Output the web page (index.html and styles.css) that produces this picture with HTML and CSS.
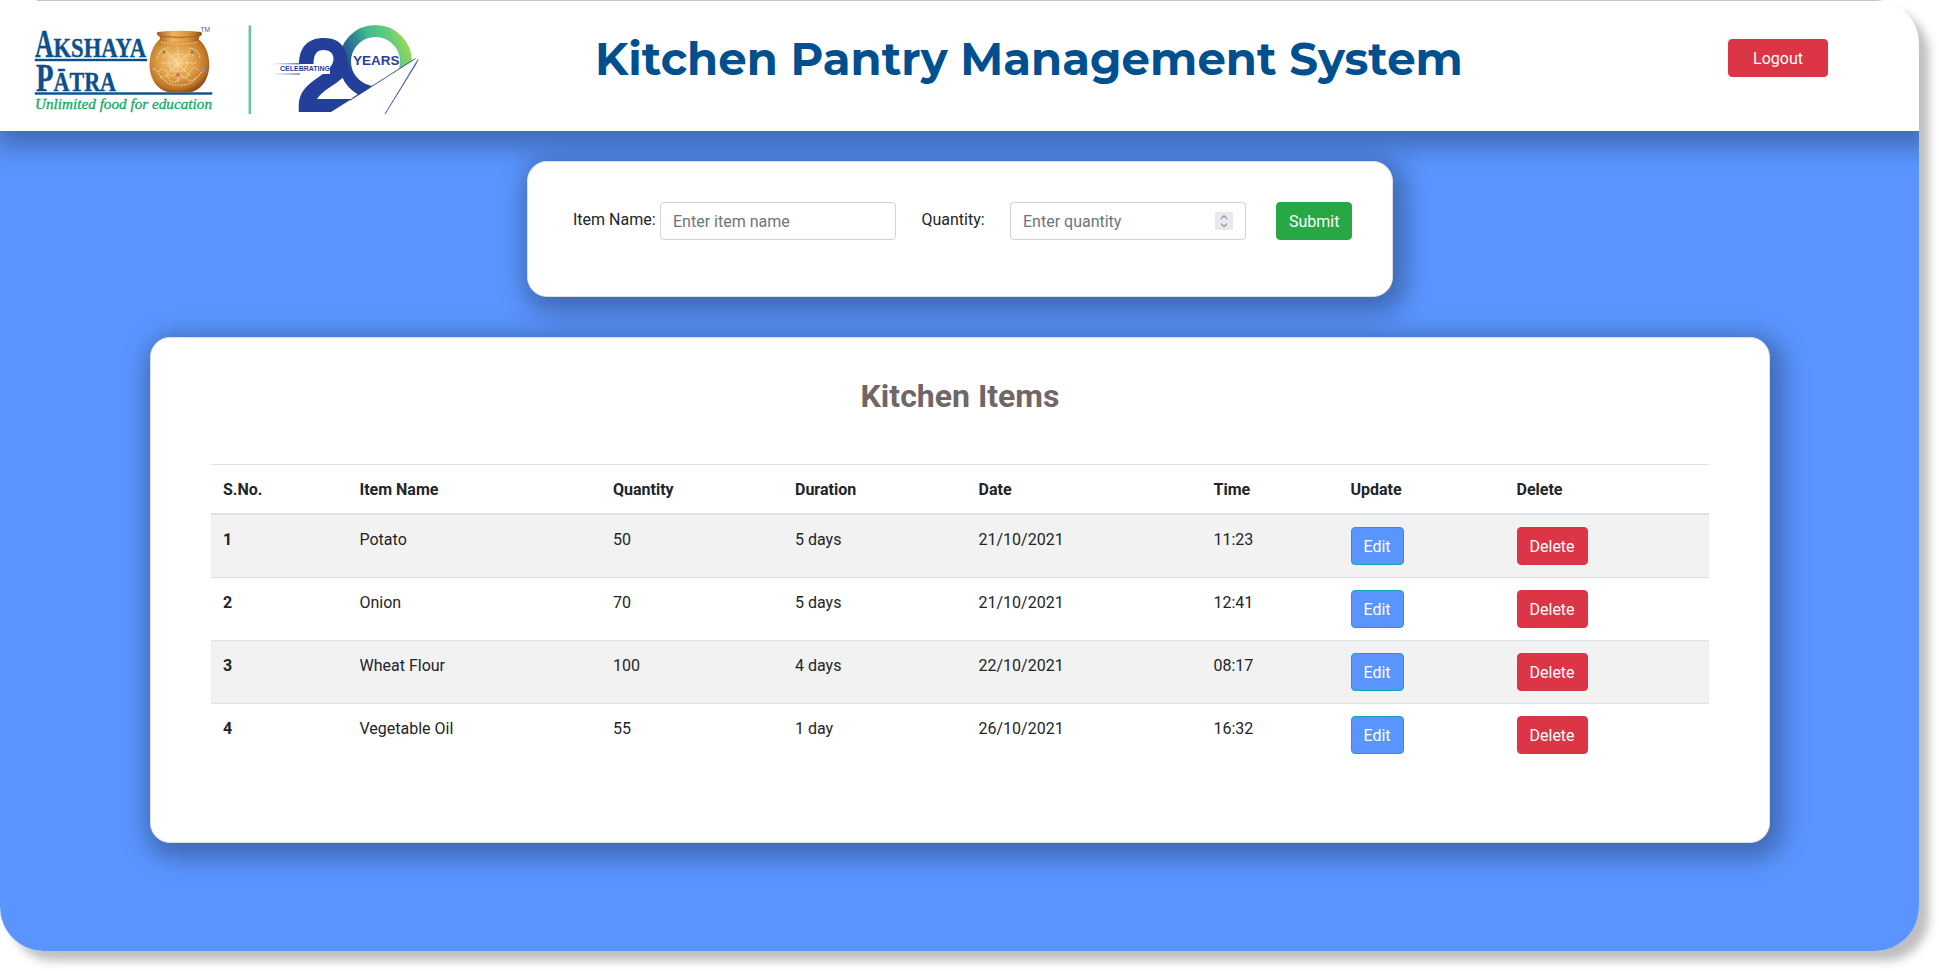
FILE: index.html
```html
<!DOCTYPE html>
<html lang="en">
<head>
<meta charset="utf-8">
<title>Kitchen Pantry Management System</title>
<link rel="stylesheet" href="styles.css">
</head>
<body>
<div class="page">
  <header class="header">
    <svg class="logo" width="396" height="100" viewBox="30 20 396 100" role="img" aria-label="Akshaya Patra">
      <defs>
        <radialGradient id="pot" cx=".45" cy=".42" r=".6">
          <stop offset="0" stop-color="#f3cf8c"/><stop offset=".5" stop-color="#e0a048"/><stop offset=".85" stop-color="#bf7426"/><stop offset="1" stop-color="#8d4d18"/>
        </radialGradient>
        <linearGradient id="rim" x1="0" x2="1" y1="0" y2="0">
          <stop offset="0" stop-color="#9c5a1e"/><stop offset=".35" stop-color="#f0b45c"/><stop offset=".7" stop-color="#d8923e"/><stop offset="1" stop-color="#8d4d18"/>
        </linearGradient>
        <linearGradient id="ring" gradientUnits="userSpaceOnUse" x1="347" y1="76" x2="412" y2="48">
          <stop offset="0" stop-color="#233f9a"/><stop offset=".22" stop-color="#2c7391"/><stop offset=".5" stop-color="#40b98c"/><stop offset=".75" stop-color="#5fcb80"/><stop offset="1" stop-color="#a5d94f"/>
        </linearGradient>
        <linearGradient id="fade" x1="0" x2="1" y1="0" y2="0">
          <stop offset="0" stop-color="#2b3f98" stop-opacity="0"/><stop offset="1" stop-color="#2b3f98"/>
        </linearGradient>
        <clipPath id="above"><path d="M290 20H420V56.1L331 112H290Z"/></clipPath>
      </defs>
      <g class="brand">
        <text y="56.7"><tspan x="35" font-size="39" textLength="18.500" lengthAdjust="spacingAndGlyphs">A</tspan><tspan x="53.500" font-size="28" textLength="92.500" lengthAdjust="spacingAndGlyphs">KSHAYA</tspan></text>
        <text y="90.7"><tspan x="36" font-size="39" textLength="17.500" lengthAdjust="spacingAndGlyphs">P</tspan><tspan x="53.500" font-size="28" textLength="62.500" lengthAdjust="spacingAndGlyphs">ĀTRA</tspan></text>
        <rect x="35" y="59" width="112" height="2"/>
        <rect x="35" y="92.500" width="177" height="2"/>
      </g>
      <text class="tm" x="200.5" y="32" textLength="9.5" lengthAdjust="spacingAndGlyphs">TM</text>
      <path fill="url(#pot)" d="M160 39C154 44 149.500 53 149.500 65C149.500 79 158 92.500 173 92.500H186C201 92.500 209.200 79 209.200 65C209.200 53 205 44 198 39Z"/>
      <path fill="url(#rim)" d="M157.500 32Q179 29.500 201 32Q203.500 34.500 199.500 36.500L198 41Q179 44 160.500 41L159.500 36.500Q155.500 34.500 157.500 32Z"/>
      <path fill="none" stroke="#a9601f" stroke-width="1" d="M160 36.300Q179 38.500 199 36.300"/>
      <g class="relief">
        <path d="M161 42Q179 46 198 42"/>
        <circle cx="178" cy="63" r="4"/><circle cx="178" cy="63" r="9"/>
        <path d="M178 47V82M161 63H196M166 51L190 76M190 51L166 76"/>
        <path d="M155 68Q166 87 179 85Q193 87 204 68M157 58Q160 48 169 48M200 58Q198 48 188 48M158 72q4-6 8 0t8 3 8 1 8-4 9-1"/>
        <path d="M160 78q5-5 9 1t9 1 9-1 9-2M163 57q4-5 6 0M187 57q4-5 7 0"/>
      </g>
      <circle cx="164" cy="52" r="1.300" fill="#5d8a4c"/><circle cx="192" cy="52" r="1.300" fill="#5d8a4c"/>
      <circle cx="154" cy="69" r="1.500" fill="#a9aeb0"/><circle cx="203.500" cy="69" r="1.700" fill="#7f93a8"/>
      <circle cx="178" cy="74.500" r="1.900" fill="#e2607f"/>
      <text class="tagline" x="35" y="108.500" textLength="177" lengthAdjust="spacingAndGlyphs">Unlimited food for education</text>
      <rect x="248.600" y="25.500" width="2.400" height="88.500" fill="#5fc697"/>
      <g clip-path="url(#above)">
        <circle cx="375.500" cy="61.500" r="30.500" fill="none" stroke="url(#ring)" stroke-width="12"/>
        <path fill="#233f9a" d="M299 64.500C299 46 309 38 324 38C335 38 341 42 345 50C348 60 348 68 352 76C355 84 361 89 368 90L360 98H350L352 99H317.500H353L331 112.500H298.700V106C299 92 306 86 318 77.500C328 70.500 333.500 65 333.500 59C333.500 53 329.500 50 323.500 50C317 50 313.500 54 313.500 64.500Z"/>
      </g>
      <path fill="#fff" d="M317 99Q320 94 328 88.500Q337 83 343 77.500Q347.500 87 359 93.500L350.500 99Z"/>
      <path fill="#233f9a" d="M342.500 77.500Q346 87 358.500 95L371 86.500Q357 82 351 70Z"/>
      <rect x="272" y="64" width="58" height="10" fill="#fff"/>
      <rect x="272" y="63.300" width="28" height="1" fill="url(#fade)"/>
      <rect x="272" y="73.500" width="28" height="1" fill="url(#fade)"/>
      <text class="twenty" x="280" y="71.400" font-size="6.500" textLength="50" lengthAdjust="spacingAndGlyphs">CELEBRATING</text>
      <text class="twenty" x="353" y="65" font-size="13.500" textLength="46.500" lengthAdjust="spacingAndGlyphs">YEARS</text>
      <path fill="none" stroke="#2b3f98" stroke-width=".9" d="M350 100.300L415.500 58.500"/>
      <path fill="#3b50a5" d="M418 59.500L385 114L415.500 65Z" stroke="#3b50a5" stroke-width=".6"/>
    </svg>
    <h1 class="title">Kitchen Pantry Management System</h1>
    <button class="btn btn-danger logout">Logout</button>
  </header>
  <main>
    <form class="card form-card">
      <label class="name-label" for="item">Item Name:</label>
      <input class="input" id="item" type="text" placeholder="Enter item name">
      <label class="quantity-label" for="quantity">Quantity:</label>
      <div class="input number">
        <input class="bare" id="quantity" type="text" placeholder="Enter quantity">
        <svg class="spinner" width="18" height="18" viewBox="0 0 18 18"><path d="M6 6.700L9 3.800L12 6.700M6 11.800L9 14.700L12 11.800"/></svg>
      </div>
      <button class="btn btn-success" type="button">Submit</button>
    </form>
    <section class="card items-card">
      <h2 class="subtitle">Kitchen Items</h2>
      <table class="table">
        <colgroup><col class="c1"><col class="c2"><col class="c3"><col class="c4"><col class="c5"><col class="c6"><col class="c7"><col></colgroup>
        <thead><tr><th>S.No.</th><th>Item Name</th><th>Quantity</th><th>Duration</th><th>Date</th><th>Time</th><th>Update</th><th>Delete</th></tr></thead>
        <tbody>
          <tr><th>1</th><td>Potato</td><td>50</td><td>5 days</td><td>21/10/2021</td><td>11:23</td><td class="action"><button class="btn btn-info">Edit</button></td><td class="action"><button class="btn btn-danger">Delete</button></td></tr>
          <tr><th>2</th><td>Onion</td><td>70</td><td>5 days</td><td>21/10/2021</td><td>12:41</td><td class="action"><button class="btn btn-info">Edit</button></td><td class="action"><button class="btn btn-danger">Delete</button></td></tr>
          <tr><th>3</th><td>Wheat Flour</td><td>100</td><td>4 days</td><td>22/10/2021</td><td>08:17</td><td class="action"><button class="btn btn-info">Edit</button></td><td class="action"><button class="btn btn-danger">Delete</button></td></tr>
          <tr><th>4</th><td>Vegetable Oil</td><td>55</td><td>1 day</td><td>26/10/2021</td><td>16:32</td><td class="action"><button class="btn btn-info">Edit</button></td><td class="action"><button class="btn btn-danger">Delete</button></td></tr>
        </tbody>
      </table>
    </section>
  </main>
</div>
</body>
</html>
```
FILE: styles.css
```css
* { box-sizing: border-box; }
body {
  margin: 0;
  background: #fff;
  color: #212529;
  font: 16px/24px Roboto, "Liberation Sans", sans-serif;
  overflow: hidden;
}
.page {
  width: 1919px;
  height: 951px;
  background: linear-gradient(#fff 100px, #5a95ff 100px);
  border-radius: 0 44px 44px 44px;
  overflow: hidden;
}
/* the shadow sits behind the page, which clips its own corners */
body::before {
  content: "";
  position: absolute;
  z-index: -1;
  width: 1919px;
  height: 951px;
  border-radius: 44px;
  box-shadow: 10px 10px 10px rgba(0, 0, 0, .25);
}
.header {
  height: 131px;
  padding: 20px 91px 0 30px;
  display: flex;
  align-items: flex-start;
  background: linear-gradient(#c9c5bd, #c9c5bd) 37px 0 / 1844px 1px no-repeat #fff;
  box-shadow: 5px 7px 26px 8px rgba(0, 0, 0, .3);
}
.logo { flex: none; }
.brand { fill: #0b508c; stroke: #0b508c; stroke-width: .4; font-family: "Liberation Serif", serif; font-weight: bold; }
.tm { fill: #34689a; font: 7px "Liberation Sans", sans-serif; }
.tagline { fill: #12a95f; stroke: #12a95f; stroke-width: .3; font: italic 14px "Liberation Serif", serif; }
.relief { fill: none; stroke: #ffe5b0; stroke-width: 1.2; stroke-dasharray: 2 1; opacity: .65; }
.twenty { fill: #2b3f98; font-family: "Liberation Sans", sans-serif; font-weight: bold; }
.title {
  width: 880px;
  margin: 11px 0 0 169px;
  color: #00508f;
  font: 700 45px/56px Montserrat, Inter, sans-serif;
  white-space: nowrap;
}
.btn {
  height: 38px;
  padding: 7px 12px 5px;
  border: 1px solid;
  border-radius: 4px;
  color: #fff;
  font: inherit;
  display: block;
}
.btn-danger { background: #dc3545; border-color: #dc3545; }
.btn-success { background: #28a745; border-color: #28a745; margin-left: 30px; }
.btn-info { background: #5a95ff; border-color: #17a2b8; }
.logout { width: 100px; margin: 19px 0 0 auto; }
.card {
  background: #fff;
  border: 1px solid #dfdfdf;
  border-radius: 20px;
  box-shadow: 5px 7px 26px 8px rgba(0, 0, 0, .3);
}
.form-card {
  width: 866px;
  height: 136px;
  margin: 30px 0 0 527px;
  padding: 40px 39px 0 45px;
  display: flex;
  align-items: flex-start;
}
.name-label { width: 87px; padding-top: 6px; }
.quantity-label { width: 88px; margin-left: 25.5px; margin-right: .5px; padding-top: 6px; }
.input {
  width: 236px;
  height: 38px;
  padding: 6px 12px;
  border: 1px solid #ced4da;
  border-radius: 4px;
  background: #fff;
  font: inherit;
}
.number { display: flex; align-items: center; }
.bare { flex: 1; min-width: 0; padding: 2px 0 0; border: 0; font: inherit; }
.input::placeholder, .bare::placeholder { color: #6c757d; opacity: 1; }
.spinner { flex: none; background: #e9e9ed; fill: none; stroke: #8f8f9d; stroke-width: 1.3; }
.items-card {
  width: 1620px;
  height: 506px;
  margin: 40px 0 0 150px;
  padding: 39px 60px 0;
}
.subtitle {
  margin: 0 0 49px;
  color: #706666;
  font-size: 32px;
  line-height: 38px;
  text-align: center;
}
.table { width: 1498px; table-layout: fixed; border-collapse: separate; border-spacing: 0; }
.table th, .table td {
  padding: 13px 12px 11px;
  border-top: 1px solid #dee2e6;
  text-align: left;
  vertical-align: top;
}
.table td.action { padding: 12px; }
.table thead th { border-bottom: 2px solid #dee2e6; }
.table tbody tr:first-child > * { border-top: 0; }
.table tbody tr:nth-child(odd) { background: #f2f2f2; }
.c1 { width: 136.5px; }
.c2 { width: 253.5px; }
.c3 { width: 182px; }
.c4 { width: 183.5px; }
.c5 { width: 235px; }
.c6 { width: 137px; }
.c7 { width: 166px; }
```
